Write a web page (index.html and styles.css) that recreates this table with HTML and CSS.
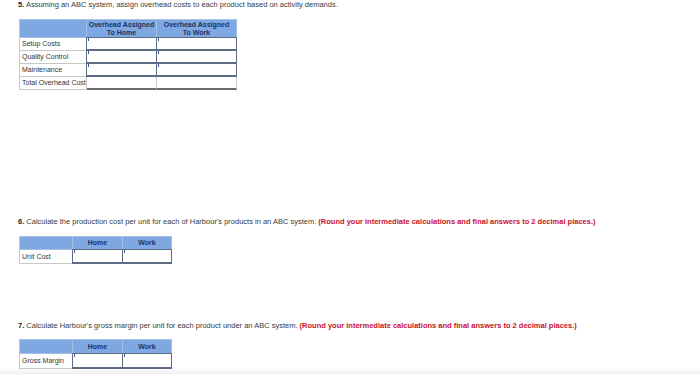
FILE: index.html
```html
<!DOCTYPE html>
<html>
<head>
<meta charset="utf-8">
<link rel="stylesheet" href="styles.css">
</head>
<body>
<div class="page">
  <section class="q q1">
    <p class="qtext"><b>5.</b> Assuming an ABC system, assign overhead costs to each product based on activity demands.</p>
    <div class="grid g1">
      <div class="hd blank"></div>
      <div class="hd">Overhead Assigned<br>To Home</div>
      <div class="hd">Overhead Assigned<br>To Work</div>
      <div class="lb">Setup Costs</div>
      <div class="in"></div>
      <div class="in"></div>
      <div class="lb">Quality Control</div>
      <div class="in"></div>
      <div class="in"></div>
      <div class="lb">Maintenance</div>
      <div class="in"></div>
      <div class="in"></div>
      <div class="lb">Total Overhead Cost</div>
      <div class="tot"></div>
      <div class="tot"></div>
    </div>
  </section>
  <section class="q q2">
    <p class="qtext"><b>6.</b> Calculate the production cost per unit for each of Harbour's products in an ABC system. <span class="red">(Round your intermediate calculations and final answers to 2 decimal places.)</span></p>
    <div class="grid g2">
      <div class="hd blank"></div>
      <div class="hd">Home</div>
      <div class="hd">Work</div>
      <div class="lb">Unit Cost</div>
      <div class="in"></div>
      <div class="in"></div>
    </div>
  </section>
  <section class="q q3">
    <p class="qtext"><b>7.</b> Calculate Harbour's gross margin per unit for each product under an ABC system. <span class="red">(Round your intermediate calculations and final answers to 2 decimal places.)</span></p>
    <div class="grid g3">
      <div class="hd blank"></div>
      <div class="hd">Home</div>
      <div class="hd">Work</div>
      <div class="lb">Gross Margin</div>
      <div class="in"></div>
      <div class="in"></div>
    </div>
  </section>
</div>
<div class="fade"></div>
</body>
</html>
```
FILE: styles.css
```css
html, body {
  margin: 0;
  padding: 0;
  background: #ffffff;
}
body {
  width: 700px;
  height: 374px;
  overflow: hidden;
  position: relative;
  font-family: "Liberation Sans", Arial, sans-serif;
  color: #333333;
}
.page {
  display: flex;
  flex-direction: column;
  padding-left: 18px;
}
.qtext {
  margin: 0;
  font-size: 7.5px;
  line-height: 9px;
  height: 9px;
  white-space: nowrap;
  color: #3a3a3a;
}
.qtext b {
  color: #222;
}
.red {
  color: #c8102e;
  font-weight: bold;
}
.q1 {
  padding-top: 0;
}
.q2 {
  margin-top: 127px;
}
.q3 {
  margin-top: 57px;
}
.grid {
  display: grid;
  margin-left: 1px;
  border-top: 1px solid #a9c1e6;
  border-left: 1px solid #c8c8c8;
}
.g1 {
  margin-top: 10px;
  width: max-content;
  grid-template-columns: 67px 70px 80px;
  grid-template-rows: 18px 13px 13px 13px 13px;
}
.g2 {
  margin-top: 10px;
  width: max-content;
  grid-template-columns: 53px 50px 49px;
  grid-template-rows: 13px 14px;
}
.g3 {
  margin-top: 9px;
  width: max-content;
  grid-template-columns: 53px 50px 49px;
  grid-template-rows: 14px 15px;
}
.hd {
  background: #7ea8e2;
  border-right: 1px solid #a3bde5;
  border-bottom: 1px solid #a3bde5;
  color: #1c3461;
  font-weight: bold;
  font-size: 7px;
  line-height: 8px;
  text-align: center;
  display: flex;
  align-items: center;
  justify-content: center;
  box-sizing: border-box;
}
.lb {
  font-size: 7px;
  line-height: 12px;
  padding-left: 2px;
  border-right: 1px solid #c8c8c8;
  border-bottom: 1px solid #c8c8c8;
  box-sizing: border-box;
  white-space: nowrap;
  color: #333;
  display: flex;
  align-items: center;
}
.in {
  position: relative;
  background: #ffffff;
  border: 1px solid #5d6c84;
  border-bottom-width: 2px;
  box-sizing: border-box;
  margin-left: -1px;
  margin-top: -1px;
}
.in::before {
  content: "";
  position: absolute;
  left: 1px;
  top: 0;
  width: 1px;
  height: 3px;
  background: #3c5a8c;
}
.tot {
  border-right: 1px solid #c8c8c8;
  border-bottom: 2px solid #6a6a6a;
  box-sizing: border-box;
}
.fade {
  position: absolute;
  left: 0;
  right: 0;
  bottom: 0;
  height: 6px;
  background: linear-gradient(to bottom, rgba(0,0,0,0), rgba(0,0,0,0.06));
}
```
